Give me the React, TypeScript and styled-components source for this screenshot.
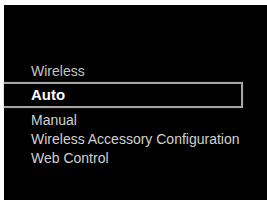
import styled, { createGlobalStyle } from "styled-components";

const GlobalStyle = createGlobalStyle`
    html, body {
        margin: 0;
        padding: 0;
        background: #ffffff;
    }
    body {
        font-family: "Liberation Sans", Arial, sans-serif;
    }
`

const Frame = styled.div`
    width: 267px;
    height: 200px;
    padding: 5px 0 0 4px;
    box-sizing: border-box;
    background: #ffffff;
`

const Screen = styled.div`
    width: 100%;
    height: 100%;
    background: #000000;
    padding-top: 57px;
    box-sizing: border-box;
    display: flex;
    flex-direction: column;
`

const Title = styled.div`
    padding-left: 27px;
    font-size: 14px;
    line-height: 19px;
    color: #c4c4c4;
    margin-bottom: 1px;
`

const Selected = styled.div`
    margin-right: 24px;
    height: 26px;
    box-sizing: border-box;
    border: 2px solid #a6a6a6;
    border-left: none;
    box-shadow: 0 0 1px #555;
    padding-left: 27px;
    font-size: 15px;
    font-weight: bold;
    line-height: 22px;
    color: #ffffff;
    margin-bottom: 3px;
`

const Item = styled.div`
    padding-left: 27px;
    font-size: 14px;
    line-height: 19px;
    color: #d2d2d2;
`

const items = ["Manual", "Wireless Accessory Configuration", "Web Control"]

export default function App() {
    return (
        <>
            <GlobalStyle />
            <Frame>
                <Screen>
                    <Title>Wireless</Title>
                    <Selected>Auto</Selected>
                    {items.map((label) => (
                        <Item key={label}>{label}</Item>
                    ))}
                </Screen>
            </Frame>
        </>
    )
}
